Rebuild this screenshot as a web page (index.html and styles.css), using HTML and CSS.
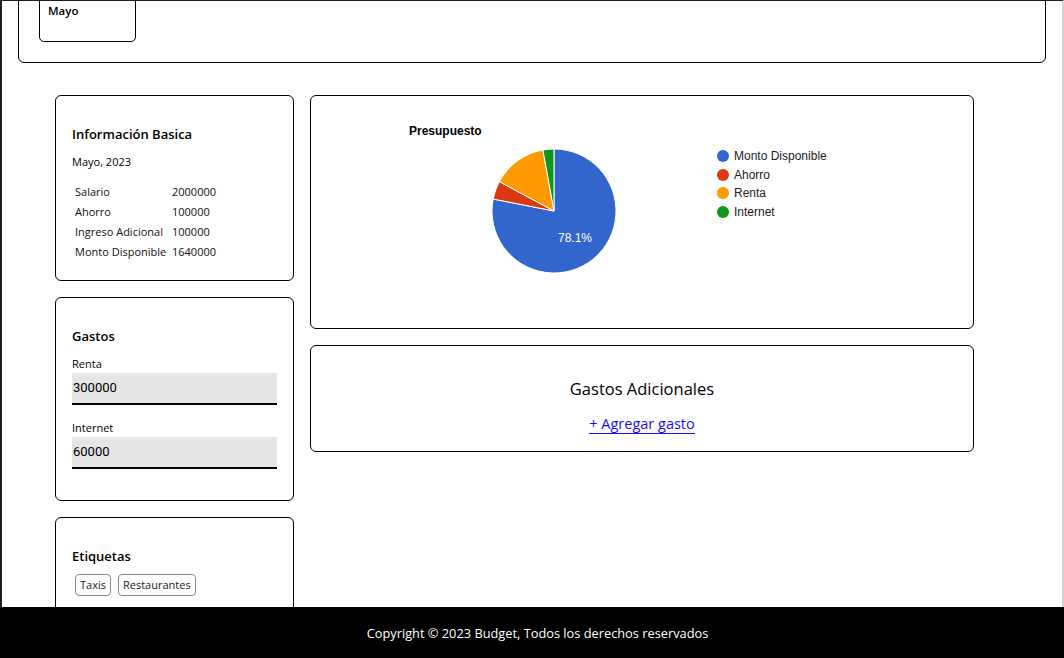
FILE: index.html
```html
<!DOCTYPE html>
<html lang="es">
<head>
<meta charset="utf-8">
<title>Budget</title>
<link rel="stylesheet" href="styles.css">
</head>
<body>
<div class="page">
  <section class="months">
    <div class="month-card"><span class="month-name">Mayo</span></div>
  </section>

  <main class="dashboard">
    <div class="side">
      <div class="card info">
        <h3 class="card-title">Información Basica</h3>
        <p class="period">Mayo, 2023</p>
        <div class="info-table">
          <span>Salario</span><span>2000000</span>
          <span>Ahorro</span><span>100000</span>
          <span>Ingreso Adicional</span><span>100000</span>
          <span>Monto Disponible</span><span>1640000</span>
        </div>
      </div>

      <div class="card gastos">
        <h3 class="card-title">Gastos</h3>
        <label class="field-label">Renta</label>
        <div class="field">300000</div>
        <label class="field-label second">Internet</label>
        <div class="field">60000</div>
      </div>

      <div class="card etiquetas">
        <h3 class="card-title">Etiquetas</h3>
        <div class="tags">
          <span class="tag">Taxis</span>
          <span class="tag">Restaurantes</span>
        </div>
      </div>
    </div>

    <div class="content">
      <div class="card chart">
        <svg class="pie" width="662" height="232" viewBox="0 0 662 232" xmlns="http://www.w3.org/2000/svg">
          <text x="98" y="39" class="chart-title">Presupuesto</text>
          <g transform="translate(-311,-96)" stroke="#ffffff" stroke-width="1">
            <path d="M554 211 L554 149 A62 62 0 1 1 493.17 199.02 Z" fill="#3366cc"/>
            <path d="M554 211 L493.17 199.02 A62 62 0 0 1 499.4 181.62 Z" fill="#dc3912"/>
            <path d="M554 211 L499.4 181.62 A62 62 0 0 1 542.93 150.0 Z" fill="#ff9900"/>
            <path d="M554 211 L542.93 150.0 A62 62 0 0 1 554 149 Z" fill="#109618"/>
          </g>
          <text x="264" y="146" class="pie-label">78.1%</text>
          <g class="legend">
            <circle cx="412" cy="60" r="6" fill="#3366cc"/>
            <text x="423" y="64">Monto Disponible</text>
            <circle cx="412" cy="79" r="6" fill="#dc3912"/>
            <text x="423" y="83">Ahorro</text>
            <circle cx="412" cy="97" r="6" fill="#ff9900"/>
            <text x="423" y="101">Renta</text>
            <circle cx="412" cy="116" r="6" fill="#109618"/>
            <text x="423" y="120">Internet</text>
          </g>
        </svg>
      </div>

      <div class="card extra">
        <h3 class="extra-title">Gastos Adicionales</h3>
        <a class="add-link" href="#">+ Agregar gasto</a>
      </div>
    </div>
  </main>
</div>

<footer class="footer">Copyright © 2023 Budget, Todos los derechos reservados</footer>
</body>
</html>
```

FILE: styles.css
```css
* { box-sizing: border-box; }

html, body {
  margin: 0;
  padding: 0;
}

body {
  font-family: "Open Sans", "Liberation Sans", sans-serif;
  color: #000;
  background: #fff;
  height: 658px;
  overflow: hidden;
  border-top: 1px solid #1e1e1e;
  border-left: 2px solid #1e1e1e;
  border-right: 2px solid #d2d2d2;
}

.page {
  display: flex;
  flex-direction: column;
}

.months {
  margin: -60px 16px 0;
  border: 1px solid #000;
  border-radius: 6px;
  padding: 20px;
  display: flex;
}

.month-card {
  width: 97px;
  height: 80px;
  border: 1px solid #000;
  border-radius: 5px;
  padding: 40px 8px 0;
}

.month-name {
  display: block;
  font-size: 11.5px;
  font-weight: 600;
  line-height: 16px;
}

.dashboard {
  margin-top: 32px;
  padding-left: 53px;
  display: grid;
  grid-template-columns: 239px 664px;
  column-gap: 16px;
  align-items: start;
}

.side {
  display: flex;
  flex-direction: column;
  gap: 16px;
}

.content {
  display: flex;
  flex-direction: column;
  gap: 16px;
}

.card {
  border: 1px solid #000;
  border-radius: 6px;
  background: #fff;
}

.card-title {
  margin: 0;
  font-size: 13px;
  font-weight: 600;
  line-height: 20px;
}

.info {
  height: 186px;
  padding: 28px 16px 0;
}

.period {
  margin: 10px 0 0;
  font-size: 11px;
  line-height: 16px;
}

.info-table {
  margin-top: 12px;
  padding-left: 3px;
  display: grid;
  grid-template-columns: 97px auto;
  font-size: 11px;
  line-height: 20px;
  color: #111;
}

.gastos {
  height: 204px;
  padding: 28px 16px 0;
}

.field-label {
  display: block;
  margin-top: 10px;
  font-size: 11px;
  line-height: 16px;
}

.field-label.second {
  margin-top: 15px;
}

.field {
  margin-top: 1px;
  height: 32px;
  background: #e5e5e5;
  border-bottom: 2px solid #000;
  padding-left: 1px;
  font-family: "Roboto", "Liberation Sans", sans-serif;
  font-size: 13px;
  line-height: 30px;
  color: #000;
}

.etiquetas {
  height: 130px;
  padding: 28px 16px 0;
}

.tags {
  margin-top: 8px;
  padding-left: 3px;
  display: flex;
  gap: 7px;
}

.tag {
  border: 1px solid #888;
  border-radius: 4px;
  padding: 0 4px;
  font-size: 11px;
  line-height: 20px;
  color: #222;
}

.chart {
  height: 234px;
}

.pie {
  display: block;
}

.chart-title {
  font-family: "Liberation Sans", Arial, sans-serif;
  font-size: 12px;
  font-weight: 700;
  fill: #000;
}

.pie-label {
  font-family: "Liberation Sans", Arial, sans-serif;
  font-size: 12px;
  fill: #fff;
  text-anchor: middle;
}

.legend text {
  font-family: "Liberation Sans", Arial, sans-serif;
  font-size: 12px;
  fill: #222;
}

.extra {
  height: 107px;
  padding-top: 31px;
  display: flex;
  flex-direction: column;
  align-items: center;
}

.extra-title {
  margin: 0;
  font-size: 16.5px;
  font-weight: 500;
  line-height: 24px;
}

.add-link {
  margin-top: 14px;
  font-size: 14.5px;
  line-height: 18px;
  color: #1a0dff;
  text-decoration: none;
  border-bottom: 1px solid #1a0dff;
}

.footer {
  position: fixed;
  left: 0;
  right: 0;
  bottom: 0;
  height: 51px;
  background: #000;
  color: #fff;
  display: flex;
  align-items: center;
  justify-content: center;
  font-size: 12.8px;
  font-weight: 500;
  padding-left: 11px;
}
```
